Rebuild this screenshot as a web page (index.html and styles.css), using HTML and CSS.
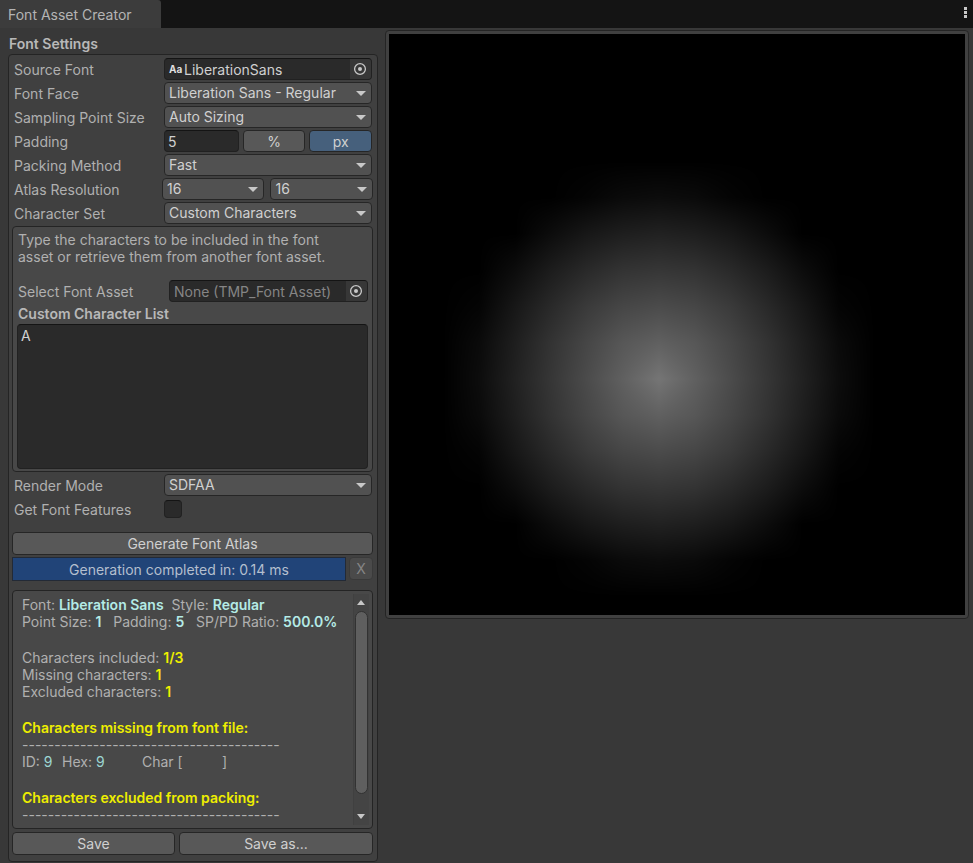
FILE: index.html
```html
<!DOCTYPE html>
<html lang="en">
<head>
<meta charset="utf-8">
<title>Font Asset Creator</title>
<link rel="stylesheet" href="styles.css">
</head>
<body>
<header class="tabbar">
  <h1 class="tab">Font Asset Creator</h1>
  <button class="menu" aria-label="Window menu"><svg width="3" height="11" viewBox="0 0 3 11"><path d="M0 0h3v3H0zM0 4h3v3H0zM0 8h3v3H0z" fill="#c8c8c8"/></svg></button>
</header>
<main class="window">
  <section class="settings">
    <h2 class="heading">Font Settings</h2>
    <form class="panel">
      <div class="row">
        <label for="source">Source Font</label>
        <div class="object"><span class="aa" aria-hidden="true">Aa</span><input id="source" type="text" value="LiberationSans" readonly><button type="button" class="pick" aria-label="Pick source font"><svg width="14" height="14" viewBox="0 0 14 14"><circle cx="7" cy="7" r="5.4" fill="none" stroke="#c8c8c8" stroke-width="1.3"/><circle cx="7" cy="7" r="2" fill="#c8c8c8"/></svg></button></div>
      </div>
      <div class="row">
        <label for="face">Font Face</label>
        <div class="drop"><select id="face"><option>Liberation Sans - Regular</option></select></div>
      </div>
      <div class="row">
        <label for="sampling">Sampling Point Size</label>
        <div class="drop"><select id="sampling"><option>Auto Sizing</option></select></div>
      </div>
      <div class="row">
        <label for="padding">Padding</label>
        <div class="group"><input id="padding" class="number" type="text" value="5"><button type="button" class="btn">%</button><button type="button" class="btn active">px</button></div>
      </div>
      <div class="row">
        <label for="packing">Packing Method</label>
        <div class="drop"><select id="packing"><option>Fast</option></select></div>
      </div>
      <div class="row">
        <label for="width">Atlas Resolution</label>
        <div class="group pair"><div class="drop"><select id="width"><option>16</option></select></div><div class="drop"><select aria-label="Atlas height"><option>16</option></select></div></div>
      </div>
      <div class="row">
        <label for="charset">Character Set</label>
        <div class="drop"><select id="charset"><option>Custom Characters</option></select></div>
      </div>

      <div class="box characters">
        <p class="hint">Type the characters to be included in the font asset or retrieve them from another font asset.</p>
        <div class="row">
          <label for="asset">Select Font Asset</label>
          <div class="object empty"><input id="asset" type="text" value="None (TMP_Font Asset)" readonly><button type="button" class="pick" aria-label="Pick font asset"><svg width="14" height="14" viewBox="0 0 14 14"><circle cx="7" cy="7" r="5.4" fill="none" stroke="#c8c8c8" stroke-width="1.3"/><circle cx="7" cy="7" r="2" fill="#c8c8c8"/></svg></button></div>
        </div>
        <label class="listlabel" for="list">Custom Character List</label>
        <textarea id="list" spellcheck="false">A</textarea>
      </div>

      <div class="row">
        <label for="mode">Render Mode</label>
        <div class="drop"><select id="mode"><option>SDFAA</option></select></div>
      </div>
      <div class="row">
        <label for="features">Get Font Features</label>
        <input id="features" class="check" type="checkbox">
      </div>

      <button type="button" class="btn generate">Generate Font Atlas</button>
      <div class="progress">
        <div class="bar" role="status">Generation completed in: 0.14 ms</div>
        <button type="button" class="btn cancel" disabled>X</button>
      </div>

      <div class="box report">
        <div class="log">
          <p>Font: <b>Liberation Sans</b>  Style: <b>Regular</b>
Point Size: <b>1</b>   Padding: <b>5</b>   SP/PD Ratio: <b>500.0%</b></p>
          <p>Characters included: <b class="warn">1/3</b>
Missing characters: <b class="warn">1</b>
Excluded characters: <b class="warn">1</b></p>
          <p><b class="warn">Characters missing from font file:</b>
----------------------------------------
ID: <span class="id">9</span>&#9;Hex: <span class="id">9</span>&#9;Char [&#9;]</p>
          <p><b class="warn">Characters excluded from packing:</b>
----------------------------------------</p>
        </div>
        <div class="scroll">
          <button type="button" aria-label="Scroll up"><svg width="8" height="5" viewBox="0 0 8 5"><path d="M0 5L4 0L8 5z" fill="#c8c8c8"/></svg></button>
          <div class="track"><div class="thumb"></div></div>
          <button type="button" aria-label="Scroll down"><svg width="8" height="5" viewBox="0 0 8 5"><path d="M0 0L4 5L8 0z" fill="#c8c8c8"/></svg></button>
        </div>
      </div>

      <div class="save">
        <button type="button" class="btn">Save</button>
        <button type="button" class="btn">Save as...</button>
      </div>
    </form>
  </section>
  <section class="preview" aria-label="Atlas preview">
    <canvas id="atlas" width="16" height="16"></canvas>
  </section>
</main>
<script src="atlas.js"></script>
</body>
</html>
```
FILE: styles.css
```css
* { box-sizing: border-box; }

body {
  margin: 0;
  background: #383838;
  color: #b0b0b0;
  font: 14px/17px Inter, "Liberation Sans", sans-serif;
}

h1, h2, p { margin: 0; font-size: 14px; }

button, input, select, textarea {
  margin: 0;
  font: inherit;
  color: #d0d0d0;
}

.tabbar {
  display: flex;
  justify-content: space-between;
  height: 28px;
  background: #141414;
}

.tab {
  padding: 6px 29px 0 8px;
  background: #3c3c3c;
  border-radius: 0 3px 0 0;
  font-weight: 400;
  color: #b4b4b4;
}

.menu {
  display: flex;
  padding: 7px 6px 0;
  border: 0;
  background: none;
}

.window {
  display: grid;
  grid-template-columns: 38.5% minmax(0, 1fr);
  gap: 7px;
  padding: 2px 4px 0 8px;
  align-items: start;
}

.heading {
  padding: 5px 1px 2px;
  font-weight: 600;
  color: #b8b8b8;
}

.panel {
  display: flex;
  flex-direction: column;
  gap: 2px;
  padding: 3px 4px 6px 3px;
  border: 1px solid #242424;
  border-radius: 4px;
  background: #404040;
}

.row {
  display: grid;
  grid-template-columns: 150px minmax(0, 1fr);
  align-items: center;
  height: 22px;
  padding: 0 1px 0 2px;
}

.object, .drop, .btn, .number, .check, textarea {
  border: 1px solid #262626;
  border-radius: 4px;
}

.object, .number, .check, textarea {
  background: #2a2a2a;
  border-color: #141414 #212121 #212121;
}

.object {
  display: flex;
  align-items: center;
  height: 22px;
  padding-left: 4px;
  overflow: hidden;
}

.object input {
  flex: 1;
  min-width: 0;
  padding: 0;
  border: 0;
  background: none;
}

.object.empty input { color: #858585; }

.aa {
  width: 15px;
  font-size: 10px;
  font-weight: 700;
  color: #dedede;
}

.pick {
  display: flex;
  align-items: center;
  justify-content: center;
  align-self: stretch;
  width: 21px;
  padding: 0;
  border: 0;
  background: #373737;
}

.drop {
  position: relative;
  height: 22px;
  background: #515151;
}

.drop::after {
  content: "";
  position: absolute;
  top: 8px;
  right: 5px;
  border: solid transparent;
  border-width: 5px 5px 0;
  border-top-color: #c8c8c8;
  pointer-events: none;
}

.drop select {
  display: block;
  width: 100%;
  height: 19px;
  padding: 0 18px 0 4px;
  border: 0;
  background: none;
  appearance: none;
}

.group {
  display: grid;
  grid-template-columns: 75px 1fr 1fr;
  gap: 4px;
}

.group.pair {
  grid-template-columns: 1fr 1fr;
  gap: 6px;
  margin: 0 -1px 0 -2px;
}

.number {
  width: 100%;
  height: 22px;
  padding: 0 3px;
}

.btn {
  height: 23px;
  padding: 0;
  background: #585858;
}

.group .btn { height: 22px; }

.btn.active { background: #46607c; }

.box {
  border: 1px solid #242424;
  border-radius: 4px;
  background: #484848;
}

.characters {
  display: flex;
  flex-direction: column;
  padding: 4px 4px 2px;
}

.hint { padding: 0 20px 0 1px; }

.characters .row {
  grid-template-columns: 151px minmax(0, 1fr);
  margin-top: 15px;
  padding: 0 0 0 1px;
}

.listlabel {
  padding: 3px 1px 2px;
  font-weight: 600;
  color: #b8b8b8;
}

textarea {
  display: block;
  width: 100%;
  height: 145px;
  padding: 2px 3px;
  resize: none;
}

.check {
  appearance: none;
  width: 18px;
  height: 18px;
}

.generate { margin-top: 10px; }

.progress {
  display: grid;
  grid-template-columns: minmax(0, 1fr) 24px;
  gap: 3px;
}

.bar {
  height: 24px;
  padding: 3px 0;
  border: 1px solid #232a36;
  background: #214478;
  text-align: center;
  color: #b4bfce;
}

.cancel {
  border-color: #3a3a3a;
  background: #4a4a4a;
  color: #858585;
}

.report {
  display: flex;
  height: 239px;
  margin-top: 7px;
  padding: 3px 3px 3px 9px;
}

.log {
  flex: 1;
  min-width: 0;
  padding-top: 2px;
  overflow: hidden;
}

.log p {
  margin-bottom: 19px;
  white-space: pre;
  tab-size: 40px;
}

.log b { font-weight: 600; color: #b4ebe6; }

.log .id { color: #9cd6d2; }

.log b.warn { color: #eeee00; }

.scroll {
  display: flex;
  flex-direction: column;
  width: 16px;
  border-left: 1px solid #404040;
  background: #444;
}

.scroll button {
  display: flex;
  align-items: center;
  justify-content: center;
  height: 17px;
  padding: 0;
  border: 0;
  background: none;
}

.track { flex: 1; padding: 0 1px; }

.thumb {
  height: 93%;
  border: 1px solid #323232;
  border-radius: 7px;
  background: #5f5f5f;
}

.save {
  display: grid;
  grid-template-columns: 163fr 194fr;
  gap: 4px;
  margin-top: 1px;
}

.preview {
  padding: 3px;
  border: 1px solid #242424;
  border-radius: 4px;
  background: #404040;
}

.preview canvas {
  display: block;
  width: 100%;
  aspect-ratio: 576 / 581;
  background: #000;
}
```
FILE: atlas.js
```js
// Draws the 16 x 16 distance field; the browser smooths it to the preview size.
const canvas = document.getElementById("atlas");
const context = canvas.getContext("2d");
const peak = 117;
const falloff = 21;
const image = context.createImageData(16, 16);
for (let y = 0; y < 16; y++) {
  for (let x = 0; x < 16; x++) {
    const value = Math.max(0, peak - falloff * Math.hypot(x - 7, y - 9));
    image.data.set([value, value, value, 255], (y * 16 + x) * 4);
  }
}
context.putImageData(image, 0, 0);
```
